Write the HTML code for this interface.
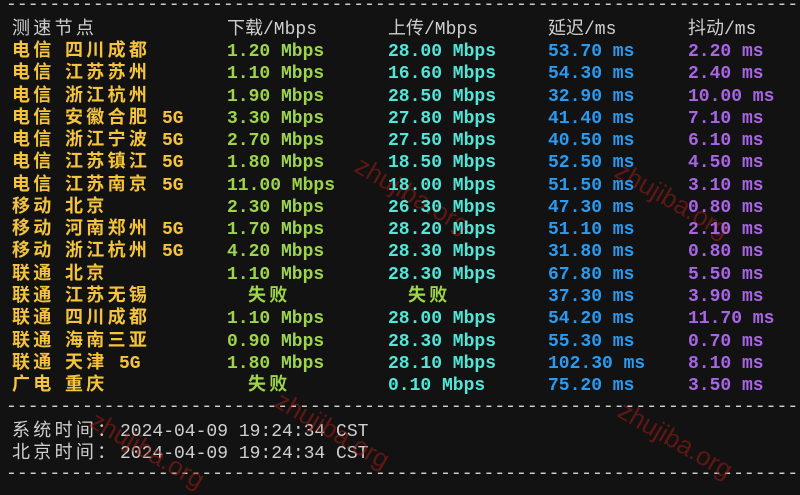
<!DOCTYPE html>
<html><head><meta charset="utf-8"><style>
body{margin:0;width:800px;height:485px;background:#121212;overflow:hidden;position:relative;font-family:"Liberation Mono","Noto Sans CJK SC",monospace;font-size:18px;font-weight:bold}
.r{position:absolute;left:0;width:800px;height:22px;line-height:22px;margin-top:2px}
.r span{position:absolute;white-space:pre;top:0}
.cj{letter-spacing:3.3px}
.y{color:#f5c43c}.g{color:#9ed44a}.c{color:#52e6d8}.b{color:#2a9bf0}.p{color:#a866e6}.w{color:#cfcfcf;font-weight:normal}
.d{position:absolute;left:6px;color:#cfcfcf;font-weight:normal;white-space:pre;letter-spacing:0.05px}
.wm{position:absolute;color:rgba(170,30,20,0.5);font-family:"Liberation Sans",sans-serif;font-weight:normal;font-size:26px;transform:rotate(30deg);transform-origin:left top}
</style></head><body>
<div class="d" style="top:-5px">---------------------------------------------------------------------------</div>
<div class="d" style="top:397px">---------------------------------------------------------------------------</div>
<div class="d" style="top:464px">---------------------------------------------------------------------------</div>
<div class="r w" style="top:17px"><span class="cj" style="left:12px">测速节点</span><span style="left:227px">下载/Mbps</span><span style="left:388px">上传/Mbps</span><span style="left:548px">延迟/ms</span><span style="left:688px">抖动/ms</span></div>
<div class="r w" style="top:419px"><span class="cj" style="left:12px">系统时间：</span><span style="left:120px">2024-04-09 19:24:34 CST</span></div>
<div class="r w" style="top:441px"><span class="cj" style="left:12px">北京时间：</span><span style="left:120px">2024-04-09 19:24:34 CST</span></div>
<div class="wm" style="left:365px;top:150px">zhujiba.org</div>
<div class="wm" style="left:625px;top:155px">zhujiba.org</div>
<div class="wm" style="left:100px;top:405px">zhujiba.org</div>
<div class="wm" style="left:285px;top:385px">zhujiba.org</div>
<div class="wm" style="left:628px;top:395px">zhujiba.org</div>
<div class="r" style="top:39px"><span class="y cj" style="left:12px">电信</span><span class="y cj" style="left:65px">四川成都</span><span class="g" style="left:227px">1.20 Mbps</span><span class="c" style="left:388px">28.00 Mbps</span><span class="b" style="left:548px">53.70 ms</span><span class="p" style="left:688px">2.20 ms</span></div>
<div class="r" style="top:61.3px"><span class="y cj" style="left:12px">电信</span><span class="y cj" style="left:65px">江苏苏州</span><span class="g" style="left:227px">1.10 Mbps</span><span class="c" style="left:388px">16.60 Mbps</span><span class="b" style="left:548px">54.30 ms</span><span class="p" style="left:688px">2.40 ms</span></div>
<div class="r" style="top:83.5px"><span class="y cj" style="left:12px">电信</span><span class="y cj" style="left:65px">浙江杭州</span><span class="g" style="left:227px">1.90 Mbps</span><span class="c" style="left:388px">28.50 Mbps</span><span class="b" style="left:548px">32.90 ms</span><span class="p" style="left:688px">10.00 ms</span></div>
<div class="r" style="top:105.8px"><span class="y cj" style="left:12px">电信</span><span class="y cj" style="left:65px">安徽合肥</span><span class="y" style="left:162px">5G</span><span class="g" style="left:227px">3.30 Mbps</span><span class="c" style="left:388px">27.80 Mbps</span><span class="b" style="left:548px">41.40 ms</span><span class="p" style="left:688px">7.10 ms</span></div>
<div class="r" style="top:128.1px"><span class="y cj" style="left:12px">电信</span><span class="y cj" style="left:65px">浙江宁波</span><span class="y" style="left:162px">5G</span><span class="g" style="left:227px">2.70 Mbps</span><span class="c" style="left:388px">27.50 Mbps</span><span class="b" style="left:548px">40.50 ms</span><span class="p" style="left:688px">6.10 ms</span></div>
<div class="r" style="top:150.4px"><span class="y cj" style="left:12px">电信</span><span class="y cj" style="left:65px">江苏镇江</span><span class="y" style="left:162px">5G</span><span class="g" style="left:227px">1.80 Mbps</span><span class="c" style="left:388px">18.50 Mbps</span><span class="b" style="left:548px">52.50 ms</span><span class="p" style="left:688px">4.50 ms</span></div>
<div class="r" style="top:172.6px"><span class="y cj" style="left:12px">电信</span><span class="y cj" style="left:65px">江苏南京</span><span class="y" style="left:162px">5G</span><span class="g" style="left:227px">11.00 Mbps</span><span class="c" style="left:388px">18.00 Mbps</span><span class="b" style="left:548px">51.50 ms</span><span class="p" style="left:688px">3.10 ms</span></div>
<div class="r" style="top:194.9px"><span class="y cj" style="left:12px">移动</span><span class="y cj" style="left:65px">北京</span><span class="g" style="left:227px">2.30 Mbps</span><span class="c" style="left:388px">26.30 Mbps</span><span class="b" style="left:548px">47.30 ms</span><span class="p" style="left:688px">0.80 ms</span></div>
<div class="r" style="top:217.2px"><span class="y cj" style="left:12px">移动</span><span class="y cj" style="left:65px">河南郑州</span><span class="y" style="left:162px">5G</span><span class="g" style="left:227px">1.70 Mbps</span><span class="c" style="left:388px">28.20 Mbps</span><span class="b" style="left:548px">51.10 ms</span><span class="p" style="left:688px">2.10 ms</span></div>
<div class="r" style="top:239.4px"><span class="y cj" style="left:12px">移动</span><span class="y cj" style="left:65px">浙江杭州</span><span class="y" style="left:162px">5G</span><span class="g" style="left:227px">4.20 Mbps</span><span class="c" style="left:388px">28.30 Mbps</span><span class="b" style="left:548px">31.80 ms</span><span class="p" style="left:688px">0.80 ms</span></div>
<div class="r" style="top:261.7px"><span class="y cj" style="left:12px">联通</span><span class="y cj" style="left:65px">北京</span><span class="g" style="left:227px">1.10 Mbps</span><span class="c" style="left:388px">28.30 Mbps</span><span class="b" style="left:548px">67.80 ms</span><span class="p" style="left:688px">5.50 ms</span></div>
<div class="r" style="top:284px"><span class="y cj" style="left:12px">联通</span><span class="y cj" style="left:65px">江苏无锡</span><span class="g cj" style="left:248px">失败</span><span class="g cj" style="left:408px">失败</span><span class="b" style="left:548px">37.30 ms</span><span class="p" style="left:688px">3.90 ms</span></div>
<div class="r" style="top:306.2px"><span class="y cj" style="left:12px">联通</span><span class="y cj" style="left:65px">四川成都</span><span class="g" style="left:227px">1.10 Mbps</span><span class="c" style="left:388px">28.00 Mbps</span><span class="b" style="left:548px">54.20 ms</span><span class="p" style="left:688px">11.70 ms</span></div>
<div class="r" style="top:328.5px"><span class="y cj" style="left:12px">联通</span><span class="y cj" style="left:65px">海南三亚</span><span class="g" style="left:227px">0.90 Mbps</span><span class="c" style="left:388px">28.30 Mbps</span><span class="b" style="left:548px">55.30 ms</span><span class="p" style="left:688px">0.70 ms</span></div>
<div class="r" style="top:350.8px"><span class="y cj" style="left:12px">联通</span><span class="y cj" style="left:65px">天津</span><span class="y" style="left:119px">5G</span><span class="g" style="left:227px">1.80 Mbps</span><span class="c" style="left:388px">28.10 Mbps</span><span class="b" style="left:548px">102.30 ms</span><span class="p" style="left:688px">8.10 ms</span></div>
<div class="r" style="top:373px"><span class="y cj" style="left:12px">广电</span><span class="y cj" style="left:65px">重庆</span><span class="g cj" style="left:248px">失败</span><span class="c" style="left:388px">0.10 Mbps</span><span class="b" style="left:548px">75.20 ms</span><span class="p" style="left:688px">3.50 ms</span></div>
</body></html>
